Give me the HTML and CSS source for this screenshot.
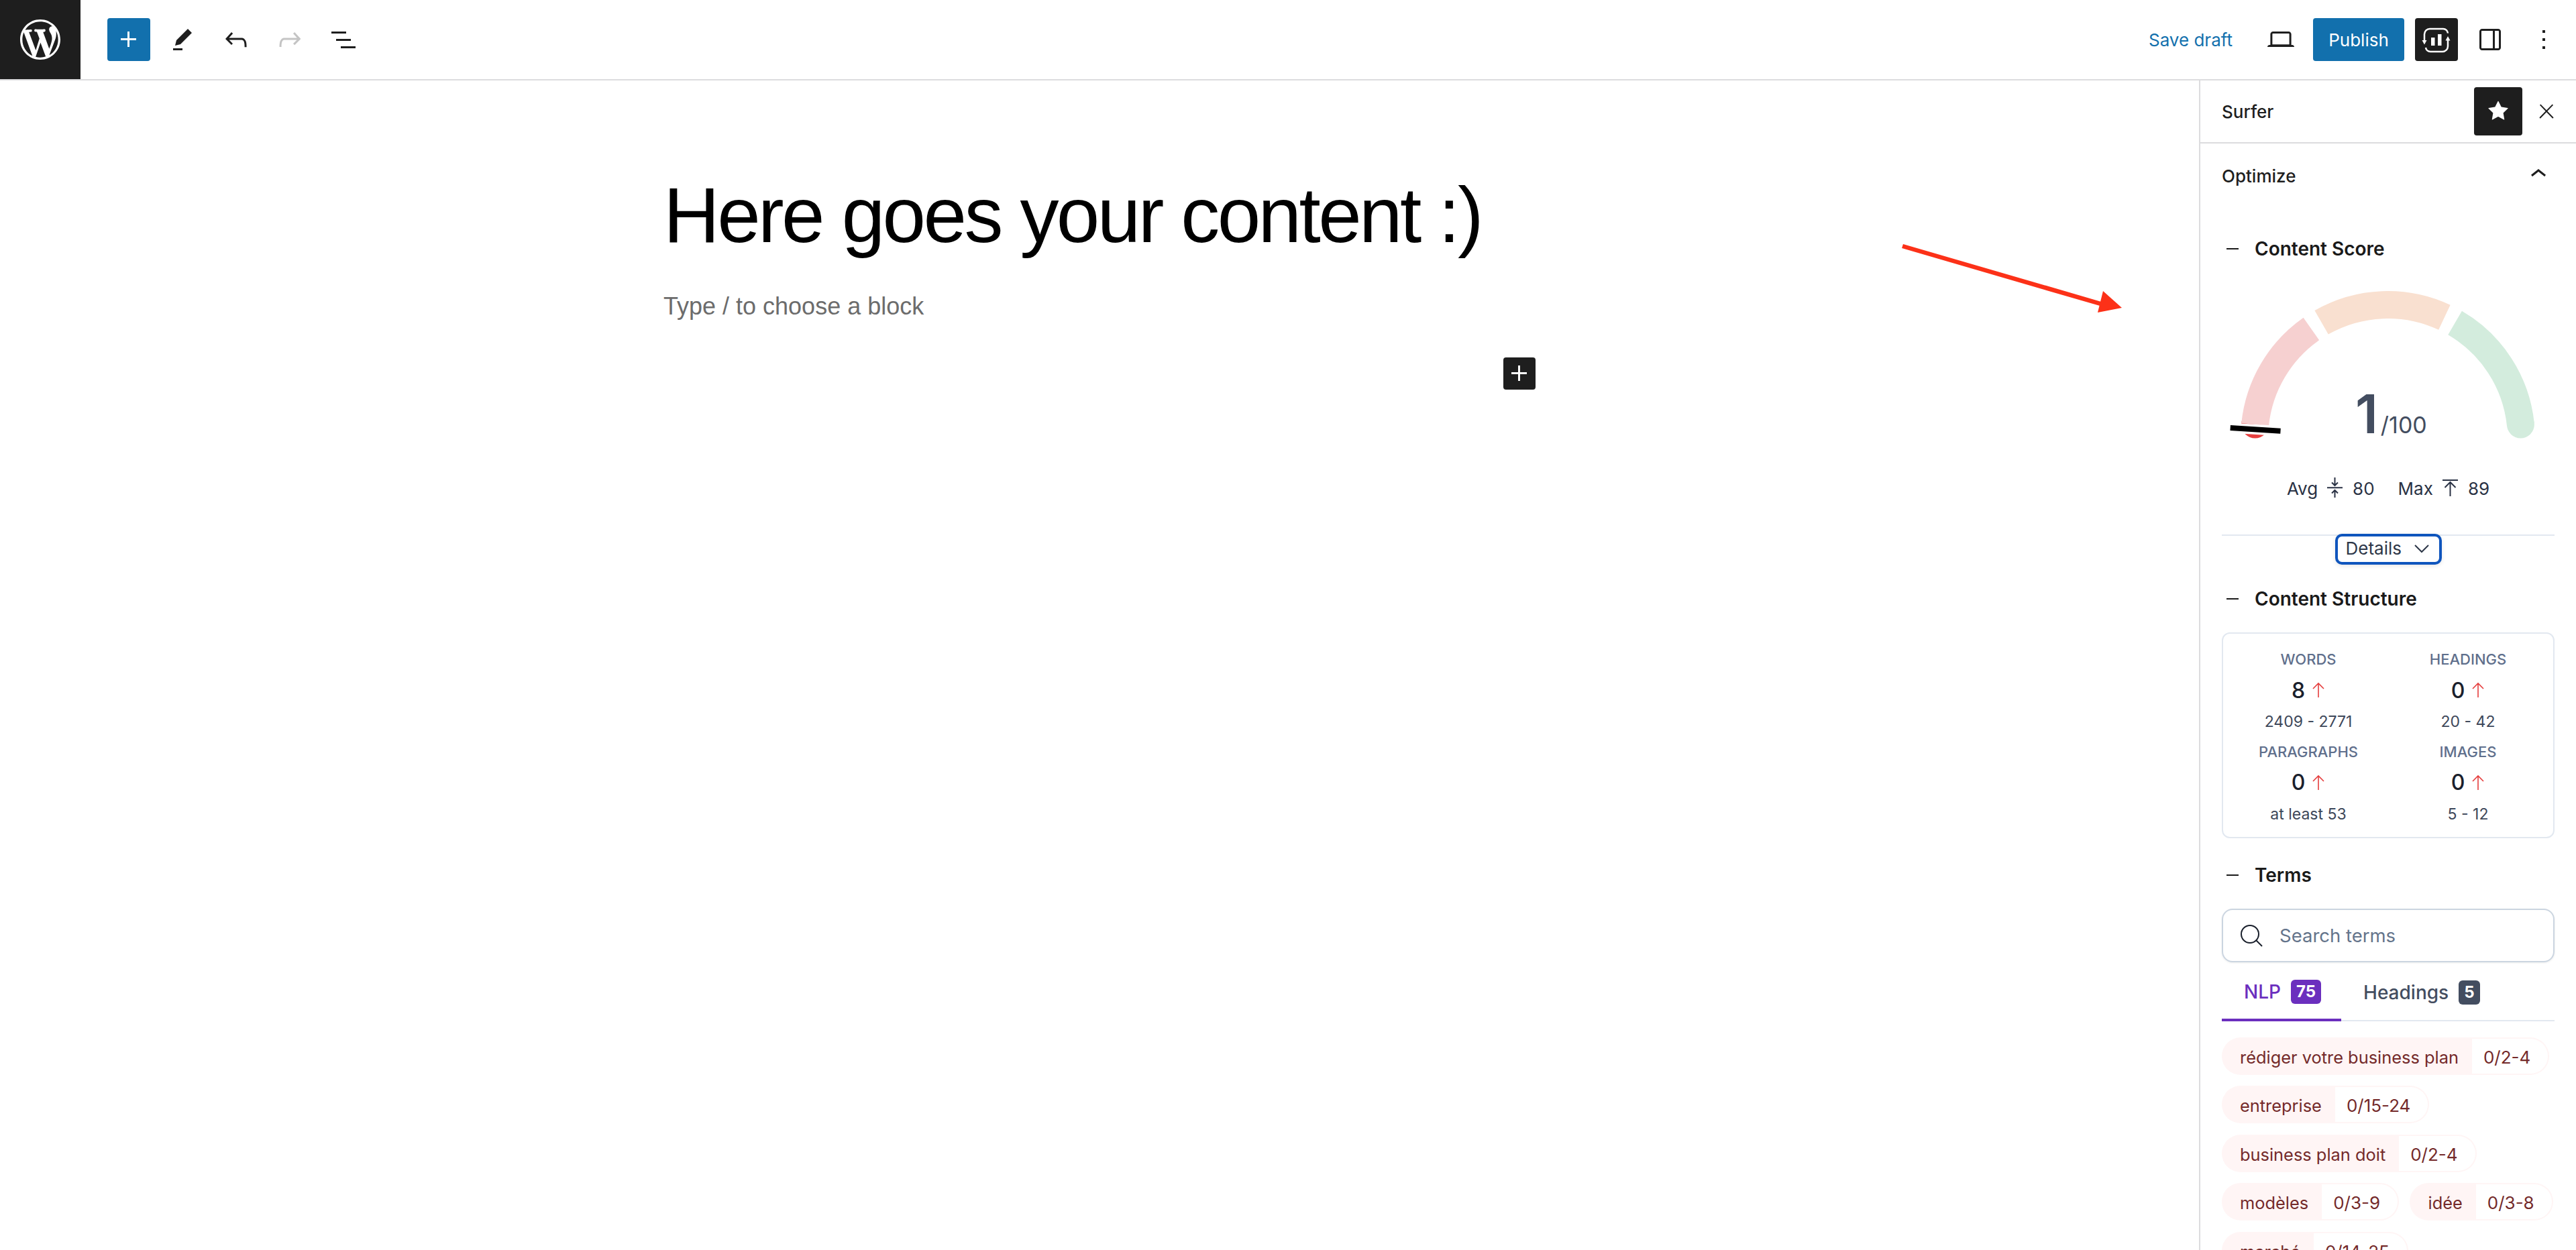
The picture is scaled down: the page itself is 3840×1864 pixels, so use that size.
FILE: index.html
```html
<!DOCTYPE html>
<html lang="en">
<head>
  <meta charset="UTF-8">
  <title>Edit post</title>
  <link rel="stylesheet" href="styles.css">
</head>
<body>
  <div class="editor">
    <header class="topbar">
      <a class="wp-logo" href="#">
        <svg viewBox="0 0 20 20" width="60" height="60"><path fill="#fff" d="M20 10c0-5.51-4.49-10-10-10C4.48 0 0 4.49 0 10c0 5.52 4.48 10 10 10 5.51 0 10-4.48 10-10zM7.78 15.37L4.37 6.22c.55-.02 1.17-.08 1.17-.08.5-.06.44-1.13-.06-1.11 0 0-1.45.11-2.37.11-.18 0-.37 0-.58-.01C4.12 2.69 6.87 1.11 10 1.11c2.33 0 4.45.87 6.05 2.34-.68-.11-1.65.39-1.65 1.58 0 .74.45 1.36.9 2.1.35.61.55 1.36.55 2.46 0 1.49-1.4 5-1.4 5l-3.03-8.37c.54-.02.82-.17.82-.17.5-.05.44-1.25-.06-1.22 0 0-1.44.12-2.38.12-.87 0-2.33-.12-2.33-.12-.5-.03-.56 1.2-.06 1.22l.92.08 1.26 3.41zM17.41 10c.24-.64.74-1.87.43-4.25.7 1.29 1.05 2.71 1.05 4.25 0 3.29-1.73 6.24-4.4 7.78.97-2.59 1.94-5.2 2.92-7.78zM6.1 18.09C3.12 16.65 1.11 13.53 1.11 10c0-1.3.23-2.48.72-3.59C3.25 10.3 4.67 14.2 6.1 18.09zm4.03-6.63l2.58 6.98c-.86.29-1.76.45-2.71.45-.79 0-1.57-.11-2.29-.33.81-2.38 1.62-4.74 2.42-7.1z"/></svg>
      </a>
      <div class="tools">
        <button class="icon-btn primary"><svg viewBox="0 0 24 24" width="48" height="48"><path d="M11 12.5V17.5H12.5V12.5H17.5V11H12.5V6H11V11H6V12.5H11Z"/></svg></button>
        <button class="icon-btn"><svg viewBox="0 0 24 24" width="48" height="48"><path d="m19 7-3-3-8.5 8.5-1 4 4-1L19 7Zm-7 11.5H5V20h7v-1.5Z"/></svg></button>
        <button class="icon-btn"><svg viewBox="0 0 24 24" width="48" height="48"><path d="M18.3 11.7c-.6-.6-1.4-.9-2.3-.9H6.7l2.9-3.3-1.1-1-4.5 5L8.5 16l1-1-2.7-2.7H16c.5 0 .9.2 1.3.5 1 1 1 3.4 1 4.5v.3h1.5v-.2c0-1.5 0-4.3-1.5-5.7z"/></svg></button>
        <button class="icon-btn disabled"><svg viewBox="0 0 24 24" width="48" height="48"><path d="M15.6 6.5l-1.1 1 2.9 3.3H8c-.9 0-1.7.3-2.3.9-1.4 1.5-1.4 4.2-1.4 5.6v.2h1.5v-.3c0-1.1 0-3.5 1-4.5.3-.3.7-.5 1.3-.5h9.2L14.5 15l1.1 1.1 4.6-4.6-4.6-5z"/></svg></button>
        <button class="icon-btn"><svg viewBox="0 0 24 24" width="48" height="48"><path d="M3 6h11v1.5H3V6zm3.5 5.5h11V13h-11v-1.5zM21 17H10v1.5h11V17z"/></svg></button>
      </div>
      <div class="actions">
        <a class="save-draft" href="#">Save draft</a>
        <button class="icon-btn"><svg viewBox="0 0 24 24" width="48" height="48"><path d="M20.5 16h-.7V8c0-1.1-.9-2-2-2H6.2c-1.1 0-2 .9-2 2v8h-.7c-.8 0-1.5.7-1.5 1.5h20c0-.8-.7-1.5-1.5-1.5zM5.7 8c0-.3.2-.5.5-.5h11.6c.3 0 .5.2.5.5v7.6H5.7V8z"/></svg></button>
        <button class="publish">Publish</button>
        <button class="icon-btn dark">
          <svg viewBox="0 0 64 64" width="64" height="64">
            <path class="loop" d="M14 36V24a8 8 0 0 1 8-8h20a7 7 0 0 1 7 6.5"/>
            <path class="loop" d="M49 30v12a8 8 0 0 1-8 8H23a7 7 0 0 1-7-6"/>
            <path d="M10.5 33h7L14 39.5zM45.5 33.5h7L49 27z"/>
            <path d="M24 29h5.5v12H24zM34 24h5.5v17H34z"/>
          </svg>
        </button>
        <button class="icon-btn"><svg viewBox="0 0 24 24" width="48" height="48"><path d="M18 4H6c-1.1 0-2 .9-2 2v12c0 1.1.9 2 2 2h12c1.1 0 2-.9 2-2V6c0-1.1-.9-2-2-2zm-4 14.500H6c-.3 0-.5-.2-.5-.5V6c0-.3.2-.5.5-.5h8v13zm4.500-.5c0 .3-.2.5-.5.5h-2.500v-13H18c.3 0 .5.2.5.5v12z"/></svg></button>
        <button class="icon-btn"><svg viewBox="0 0 24 24" width="48" height="48"><path d="M13 19h-2v-2h2v2zm0-6h-2v-2h2v2zm0-6h-2V5h2v2z"/></svg></button>
      </div>
    </header>

    <div class="workspace">
      <main class="canvas">
        <div class="post">
          <h1 class="post-title">Here goes your content :)</h1>
          <p class="placeholder">Type / to choose a block</p>
          <div class="inserter-row">
            <button class="inserter"><svg viewBox="0 0 24 24" width="48" height="48"><path d="M11 12.5V17.5H12.5V12.5H17.5V11H12.5V6H11V11H6V12.5H11Z"/></svg></button>
          </div>
        </div>
        <svg class="red-arrow" viewBox="0 0 340 110" width="340" height="110">
          <path d="M6 9 L315 99" stroke="#fc3118" stroke-width="6.5" fill="none"/>
          <path d="M305 76 L333 101 L297 108Z" fill="#fc3118"/>
        </svg>
      </main>

      <aside class="sidebar">
        <div class="sidebar-head">
          <span class="sidebar-name">Surfer</span>
          <button class="star-btn"><svg viewBox="0 0 24 24" width="48" height="48"><path d="M11.776 4.454a.25.25 0 01.448 0l2.069 4.192a.25.25 0 00.188.137l4.626.672a.25.25 0 01.139.426l-3.348 3.263a.25.25 0 00-.072.222l.79 4.607a.25.25 0 01-.362.263l-4.138-2.175a.25.25 0 00-.232 0l-4.138 2.175a.25.25 0 01-.363-.263l.79-4.607a.25.25 0 00-.071-.222L4.754 9.881a.25.25 0 01.139-.426l4.626-.672a.25.25 0 00.188-.137l2.069-4.192z"/></svg></button>
          <button class="close-btn"><svg viewBox="0 0 24 24" width="34" height="34"><path d="M13 11.8l6.1-6.3-1-1-6.1 6.2-6.1-6.2-1 1 6.1 6.3-6.5 6.7 1 1 6.5-6.6 6.5 6.6 1-1z"/></svg></button>
        </div>

        <div class="panel-title">
          <span>Optimize</span>
          <svg viewBox="0 0 24 24" width="48" height="48"><path d="M6.5 12.4L12 8l5.5 4.4-.9 1.2L12 10l-4.5 3.6-1-1.2z"/></svg>
        </div>

        <div class="panel-body">
          <h3 class="section-title score-title"><span class="dash"></span>Content Score</h3>

          <div class="gauge">
            <svg viewBox="0 0 496 240" width="496" height="240">
              <circle cx="49.6" cy="213" r="20.5" fill="#e53e3e"/>
              <path d="M49.6 213A199 199 0 0 1 133.4 70.5" class="arc" stroke="#f6d0d0"/>
              <path d="M148.6 60.8A199 199 0 0 1 331.9 53.3" class="arc" stroke="#f9e0d0"/>
              <path d="M347.6 61.5A199 199 0 0 1 445.4 213" class="arc" stroke="#d3ecdd"/>
              <circle cx="445.4" cy="213" r="20.5" fill="#d3ecdd"/>
              <path d="M12.7 218L87.5 222.7" stroke="#fff" stroke-width="15"/>
              <path d="M12.7 218L87.5 222.7" stroke="#000" stroke-width="8"/>
            </svg>
            <div class="score"><b>1</b><span>/100</span></div>
          </div>

          <div class="score-stats">
            <span>Avg</span>
            <svg viewBox="0 0 24 32" width="24" height="32"><path d="M0 15.3H23M11.5 0V12M7 7.5l4.5 4.5 4.5-4.5M11.5 30V19M7 23.5l4.5-4.5 4.5 4.5"/></svg>
            <span class="stat-num">80</span>
            <span class="stat-max">Max</span>
            <svg viewBox="0 0 24 32" width="24" height="32"><path d="M0 4H23M11.5 7V28M3.5 15l8-8 8 8"/></svg>
            <span class="stat-num">89</span>
          </div>

          <div class="details-row">
            <button class="details-btn">Details
              <svg viewBox="0 0 24 14" width="24" height="14"><path d="M2 2l10 10L22 2"/></svg>
            </button>
          </div>

          <h3 class="section-title structure-title"><span class="dash"></span>Content Structure</h3>

          <div class="structure">
            <div class="metric">
              <div class="metric-label">WORDS</div>
              <div class="metric-value">8<svg class="up" viewBox="0 0 20 24" width="20" height="24"><path d="M10 23V2M2 10l8-8 8 8"/></svg></div>
              <div class="metric-range">2409 - 2771</div>
            </div>
            <div class="metric">
              <div class="metric-label">HEADINGS</div>
              <div class="metric-value">0<svg class="up" viewBox="0 0 20 24" width="20" height="24"><path d="M10 23V2M2 10l8-8 8 8"/></svg></div>
              <div class="metric-range">20 - 42</div>
            </div>
            <div class="metric">
              <div class="metric-label">PARAGRAPHS</div>
              <div class="metric-value">0<svg class="up" viewBox="0 0 20 24" width="20" height="24"><path d="M10 23V2M2 10l8-8 8 8"/></svg></div>
              <div class="metric-range">at least 53</div>
            </div>
            <div class="metric">
              <div class="metric-label">IMAGES</div>
              <div class="metric-value">0<svg class="up" viewBox="0 0 20 24" width="20" height="24"><path d="M10 23V2M2 10l8-8 8 8"/></svg></div>
              <div class="metric-range">5 - 12</div>
            </div>
          </div>

          <h3 class="section-title terms-title"><span class="dash"></span>Terms</h3>

          <div class="search">
            <svg viewBox="0 0 34 34" width="34" height="34"><circle cx="15" cy="15" r="13"/><path d="M24.5 24.5L33 33"/></svg>
            <span>Search terms</span>
          </div>

          <div class="tabs">
            <div class="tab active">NLP <span class="badge">75</span></div>
            <div class="tab">Headings <span class="badge">5</span></div>
          </div>

          <div class="terms">
            <div class="term"><span class="term-name">rédiger votre business plan</span><span class="term-count">0/2-4</span></div>
            <div class="term"><span class="term-name">entreprise</span><span class="term-count">0/15-24</span></div>
            <div class="term"><span class="term-name">business plan doit</span><span class="term-count">0/2-4</span></div>
            <div class="term"><span class="term-name">modèles</span><span class="term-count">0/3-9</span></div>
            <div class="term"><span class="term-name">idée</span><span class="term-count">0/3-8</span></div>
            <div class="term"><span class="term-name">marché</span><span class="term-count">0/14-25</span></div>
          </div>
        </div>
      </aside>
    </div>
  </div>
</body>
</html>
```

FILE: styles.css
```css
* {
  margin: 0;
  padding: 0;
  box-sizing: border-box;
}

html, body {
  height: 100%;
  overflow: hidden;
  background: #fff;
  font-family: "Inter", "Liberation Sans", sans-serif;
  color: #1e1e1e;
}

button {
  border: 0;
  background: none;
  font-family: inherit;
  cursor: pointer;
}

.editor {
  display: flex;
  flex-direction: column;
  height: 100vh;
}

/* top toolbar */
.topbar {
  display: flex;
  align-items: center;
  flex: none;
  height: 120px;
  border-bottom: 2px solid #dcdcde;
}

.wp-logo {
  display: flex;
  align-items: center;
  justify-content: center;
  width: 120px;
  height: 118px;
  background: #1e1e1e;
}

.tools {
  display: flex;
  gap: 16px;
  margin-left: 40px;
}

.actions {
  display: flex;
  align-items: center;
  gap: 16px;
  margin-left: auto;
  padding-right: 16px;
}

.icon-btn {
  display: flex;
  align-items: center;
  justify-content: center;
  width: 64px;
  height: 64px;
  border-radius: 4px;
  fill: #1e1e1e;
}

.icon-btn.primary {
  background: #1270ad;
  fill: #fff;
}

.icon-btn.disabled {
  fill: #c4c4c4;
}

.icon-btn.dark {
  background: #1e1e1e;
  fill: #fff;
}

.loop {
  fill: none;
  stroke: #fff;
  stroke-width: 2.5;
}

.save-draft {
  margin-right: 24px;
  font-size: 26px;
  color: #1270ad;
  text-decoration: none;
}

.publish {
  width: 136px;
  height: 64px;
  border-radius: 4px;
  background: #1270ad;
  font-size: 26px;
  color: #fff;
}

/* main area */
.workspace {
  display: flex;
  flex: 1;
  min-height: 0;
}

.canvas {
  position: relative;
  flex: 1;
}

.post {
  width: 1300px;
  margin: 0 auto;
  padding-top: 132px;
}

.post-title {
  font-family: "Liberation Sans", Arial, sans-serif;
  font-size: 116px;
  font-weight: 400;
  line-height: 1.2;
  letter-spacing: -3.6px;
  white-space: nowrap;
  color: #000;
}

.placeholder {
  margin-top: 39px;
  font-family: "Liberation Sans", Arial, sans-serif;
  font-size: 36px;
  line-height: 1.5;
  color: #6c6c6c;
}

.inserter-row {
  display: flex;
  justify-content: flex-end;
  margin-top: 49px;
}

.inserter {
  display: flex;
  width: 48px;
  height: 48px;
  border-radius: 4px;
  background: #1e1e1e;
  fill: #fff;
}

.red-arrow {
  position: absolute;
  left: 2830px;
  top: 238px;
}

/* sidebar */
.sidebar {
  flex: none;
  width: 562px;
  overflow: hidden;
  border-left: 2px solid #dcdcde;
}

.sidebar-head {
  display: flex;
  align-items: center;
  height: 94px;
  padding-left: 32px;
  border-bottom: 2px solid #dcdcde;
}

.sidebar-name {
  flex: 1;
  font-size: 26px;
  font-weight: 500;
}

.star-btn {
  display: flex;
  align-items: center;
  justify-content: center;
  width: 72px;
  height: 72px;
  border-radius: 4px;
  background: #1e1e1e;
  fill: #fff;
}

.close-btn {
  display: flex;
  margin: 0 27px 0 19px;
  fill: #1e1e1e;
}

.panel-title {
  display: flex;
  align-items: center;
  justify-content: space-between;
  height: 96px;
  padding: 0 32px;
  font-size: 26px;
  font-weight: 500;
}

.panel-title svg {
  margin-top: -4px;
  fill: #1e1e1e;
}

.panel-body {
  padding: 0 32px;
}

.section-title {
  display: flex;
  align-items: center;
  height: 44px;
  font-size: 28px;
  font-weight: 600;
  color: #1a1a1a;
}

.dash {
  width: 18px;
  height: 2px;
  margin: 0 24px 0 7px;
  background: #1a1a1a;
}

.score-title {
  margin-top: 39px;
  margin-bottom: -1px;
}

.gauge {
  position: relative;
  height: 240px;
  margin-top: 28px;
}

.gauge svg {
  display: block;
}

.arc {
  fill: none;
  stroke-width: 41;
}

.score {
  position: absolute;
  left: 199px;
  top: 149px;
  display: flex;
  align-items: baseline;
  color: #434d60;
}

.score b {
  font-size: 80px;
  font-weight: 600;
  line-height: 96px;
}

.score span {
  margin-left: 4px;
  font-size: 34px;
}

.score-stats {
  display: flex;
  align-items: center;
  justify-content: center;
  height: 36px;
  margin-top: 50px;
  font-size: 26px;
  color: #2a3244;
}

.score-stats svg {
  margin: 0 14px;
  fill: none;
  stroke: #2a3244;
  stroke-width: 2;
}

.stat-max {
  margin-left: 35px;
}

.details-row {
  display: flex;
  justify-content: center;
  margin-top: 51px;
  border-top: 2px solid #e2e8f0;
}

.details-btn {
  display: flex;
  align-items: center;
  gap: 18px;
  width: 159px;
  height: 46px;
  margin-top: -3px;
  margin-bottom: -1px;
  padding: 0 0 3px 12px;
  border: 4px solid #0f55bd;
  border-radius: 10px;
  background: #fff;
  box-shadow: 0 2px 6px rgba(0, 0, 0, 0.1);
  font-size: 26px;
  color: #2d3748;
}

.details-btn svg {
  fill: none;
  stroke: #2d3748;
  stroke-width: 2;
}

.structure-title {
  margin-top: 30px;
  margin-bottom: -2px;
}

.structure {
  display: grid;
  grid-template-columns: 238px 238px;
  justify-content: center;
  row-gap: 12px;
  height: 307px;
  margin-top: 30px;
  padding: 22px 0 18px;
  border: 2px solid #e2e8f0;
  border-radius: 12px;
}

.metric {
  text-align: center;
}

.metric-label {
  font-size: 22px;
  font-weight: 500;
  line-height: 32px;
  color: #5f6f8c;
}

.metric-value {
  display: flex;
  align-items: center;
  justify-content: center;
  gap: 10px;
  height: 44px;
  margin-top: 8px;
  font-size: 32px;
  font-weight: 500;
  color: #1a202c;
}

.up {
  fill: none;
  stroke: #e53e3e;
  stroke-width: 1.6;
}

.metric-range {
  margin-top: 9px;
  font-size: 23px;
  line-height: 32px;
  color: #3d4759;
}

.terms-title {
  margin-top: 33px;
  margin-bottom: -2px;
}

.search {
  display: flex;
  align-items: center;
  gap: 25px;
  height: 80px;
  margin-top: 30px;
  padding-left: 25px;
  border: 2px solid #cbd5e0;
  border-radius: 16px;
  box-shadow: 0 1px 3px rgba(0, 0, 0, 0.08);
  font-size: 27.5px;
  color: #64748b;
}

.search svg {
  fill: none;
  stroke: #1a202c;
  stroke-width: 2;
}

.tabs {
  display: flex;
  margin-top: 4px;
  box-shadow: inset 0 -2px 0 #e2e8f0;
}

.tab {
  display: flex;
  align-items: center;
  gap: 15px;
  height: 84px;
  padding: 0 30px 3px 33px;
  font-size: 28px;
  font-weight: 500;
  color: #434d60;
}

.tab.active {
  padding-bottom: 0;
  border-bottom: 4px solid #6b2fbe;
  color: #6b2fbe;
}

.badge {
  padding: 0 8px;
  border-radius: 6px;
  background: #434d60;
  font-size: 24px;
  font-weight: 700;
  line-height: 36px;
  color: #fff;
}

.tab.active .badge {
  background: #6b2fbe;
}

.terms {
  display: flex;
  flex-wrap: wrap;
  gap: 16.4px;
  margin-top: 24px;
}

.term {
  display: flex;
  height: 56px;
  font-size: 26px;
  line-height: 52px;
  white-space: nowrap;
  color: #742a2a;
}

.term-name {
  padding: 4px 20px 0 27px;
  border-radius: 28px 0 0 28px;
  background: #fff5f5;
  font-size: 25.4px;
}

.term-count {
  padding: 2px 26px 0 17px;
  border: 2px solid #fff5f5;
  border-left: 0;
  border-radius: 0 28px 28px 0;
}
```
